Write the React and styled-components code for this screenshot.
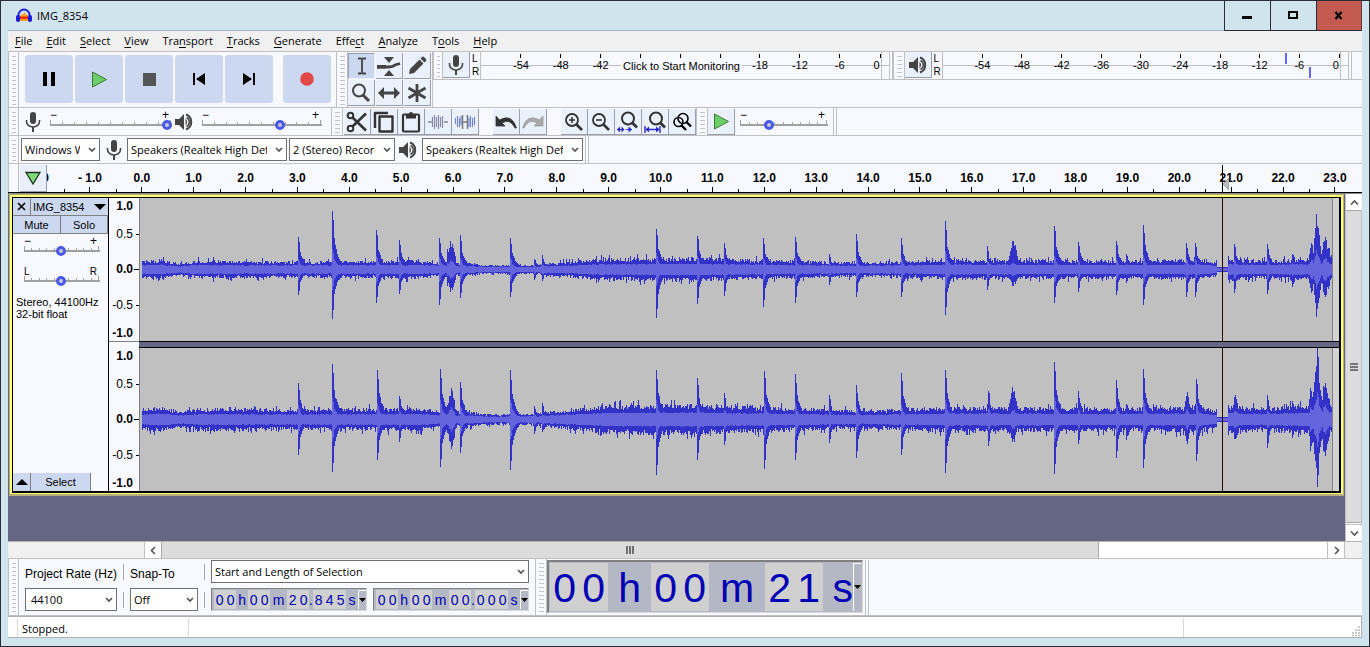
import React from "react";
import styled, { createGlobalStyle, css } from "styled-components";

const UI = `"Open Sans", "Noto Sans", sans-serif`;
const ARIAL = `"Liberation Sans", Arial, sans-serif`;
const LINE = "#c0c0c0";
const PALE = "#f8f9fe";
const BLUE = "#ccd8f0";
const SLATE = "#646684";

const Global = createGlobalStyle`
  *, *::before, *::after { box-sizing: border-box; }
  body { margin: 0; background: #d0e4ee; font-family: ${UI}; font-size: 11px; color: #000; }
  button, select, input { font: inherit; color: inherit; margin: 0; padding: 0; }
  button { border: 0; background: none; display: flex; align-items: center; justify-content: center; }
  svg { display: block; flex: none; }
`;

/* ---------- window frame ---------- */
const Window = styled.div`
  min-height: 100vh;
  display: flex;
  flex-direction: column;
  background: #d0e4ee;
  border: 1px solid #2b2d36;
  padding: 0 7px 8px;
`;
const TitleBar = styled.header`
  display: flex;
  height: 30px;
  align-items: center;
  border-bottom: 1px solid #a0b6cc;
  padding-left: 8px;
  gap: 5px;
  flex: none;
`;
const Title = styled.h1`
  flex: 1;
  margin: 0;
  font-size: 11px;
  font-weight: 400;
  line-height: 16px;
`;
const WinButtons = styled.div`
  display: flex;
  align-self: stretch;
`;
const WinButton = styled.button`
  width: 46px;
  height: 30px;
  border-left: 1px solid #2b2d36;
  border-bottom: 1px solid #2b2d36;
  background: ${(p) => (p.$close ? "#c25a50" : "transparent")};
  ${(p) => p.$close && css`border-right: 1px solid #6b3a3a;`}
`;
const MenuBar = styled.nav`
  display: flex;
  height: 20px;
  align-items: center;
  background: #f0f0f0;
  padding-left: 7px;
  gap: 14px;
  flex: none;
`;
const MenuItem = styled.button`
  line-height: 16px;
  display: block;
  u { text-underline-offset: 2px; }
`;
const Client = styled.main`
  flex: 1;
  display: flex;
  flex-direction: column;
  background: ${PALE};
`;

/* ---------- toolbars ---------- */
const DockRow = styled.div`
  display: flex;
  height: ${(p) => p.$h || 28}px;
  border-top: 1px solid ${LINE};
  flex: none;
`;
const DockColumn = styled.div`
  flex: 1;
  min-width: 0;
`;
const MeterRow = styled.div`
  display: flex;
  height: 28px;
  border-bottom: 1px solid ${LINE};
`;
const Grabber = styled.div`
  width: ${(p) => p.$w || 11}px;
  flex: none;
  align-self: stretch;
  border-left: 1px solid ${LINE};
  border-right: 1px solid ${LINE};
  padding: 4px 2px 2px 3px;
  &::before {
    content: "";
    display: block;
    height: 100%;
    background: ${(p) => (p.$plain ? "none" : "repeating-linear-gradient(#c4c4c4 0 1px, transparent 1px 4px)")};
  }
`;
const ToolBar = styled.div`
  display: flex;
  align-items: ${(p) => p.$align || "center"};
  gap: ${(p) => p.$gap || 0}px;
  padding: ${(p) => p.$pad || "0"};
  width: ${(p) => (p.$w ? p.$w + "px" : "auto")};
  flex: ${(p) => p.$flex || "none"};
  min-width: 0;
`;
const BarEnd = styled.div`
  width: 4px;
  align-self: stretch;
  flex: none;
  border-left: 1px solid ${LINE};
  border-right: 1px solid ${LINE};
`;
const TransportButton = styled.button`
  width: 48px;
  height: 48px;
  border-radius: 3px;
  background: ${BLUE};
  ${(p) => p.$apart && css`margin-left: 8px;`}
`;
const ToolGrid = styled.div`
  display: grid;
  grid-template-columns: repeat(3, 28px);
  grid-auto-rows: 27px;
  padding-top: 1px;
  border-right: 1px solid ${LINE};
`;
const ToolButton = styled.button`
  width: 27px;
  height: 26px;
  flex: none;
  background: ${(p) => (p.$down ? BLUE : "#eaf1fd")};
  border-right: 1px solid ${(p) => (p.$down ? "#eaf1fd" : "#989eb0")};
  border-bottom: 1px solid ${(p) => (p.$down ? "#eaf1fd" : "#989eb0")};
  ${(p) => p.$down && css`border-left: 1px solid #989eb0; border-top: 1px solid #989eb0;`}
`;
const Gap = styled.div`
  width: ${(p) => p.$w || 14}px;
  flex: none;
`;

/* ---------- slider ---------- */
const SliderBox = styled.div`
  position: relative;
  width: ${(p) => p.$w}px;
  height: 22px;
  flex: none;
  font-family: ${ARIAL};
`;
const SliderEnds = styled.div`
  display: flex;
  justify-content: space-between;
  height: 9px;
  line-height: 9px;
  font-size: ${(p) => (p.$letters ? 10 : 12)}px;
  padding-right: 3px;
`;
const SliderTicks = styled.div`
  display: flex;
  justify-content: space-between;
  align-items: flex-end;
  height: 6px;
  border-bottom: 2px solid #a0a0a0;
  padding-right: 1px;
  i { width: 1px; height: 2px; background: #a0a0a0; }
  i:first-child, i:last-child { height: 4px; }
`;
const Range = styled.input`
  appearance: none;
  position: absolute;
  left: 0;
  top: 8px;
  width: 100%;
  height: 12px;
  background: transparent;
  &::-webkit-slider-thumb {
    appearance: none;
    width: 10px;
    height: 10px;
    border-radius: 50%;
    border: 3px solid #4a58e8;
    background: #c8c8d8;
  }
`;
function Slider({ w, value, label, ends = ["−", "+"] }) {
  return (
    <SliderBox $w={w}>
      <SliderEnds $letters={ends[0] === "L"}><span>{ends[0]}</span><span>{ends[1]}</span></SliderEnds>
      <SliderTicks>{Array.from({ length: 11 }, (_, i) => <i key={i} />)}</SliderTicks>
      <Range type="range" min="0" max="100" defaultValue={value} aria-label={label} />
    </SliderBox>
  );
}

/* ---------- select ---------- */
const SelectBox = styled.div`
  position: relative;
  width: ${(p) => p.$w}px;
  height: 23px;
  flex: none;
  svg { position: absolute; right: 4px; top: 9px; pointer-events: none; }
`;
const NativeSelect = styled.select`
  appearance: none;
  width: 100%;
  height: 100%;
  background: #fff;
  border: 1px solid #707070;
  border-radius: 0;
  line-height: 16px;
  padding: 0 19px 0 ${(p) => p.$pad || 3}px;
`;
function Select({ w, label, value, pad, id }) {
  return (
    <SelectBox $w={w}>
      <NativeSelect id={id} aria-label={label} $pad={pad}><option>{value}</option></NativeSelect>
      <svg width="8" height="6" viewBox="0 0 8 6"><path d="M1 1l3 3 3-3" fill="none" stroke="#555" strokeWidth="1.7" /></svg>
    </SelectBox>
  );
}

/* ---------- meters ---------- */
const LR = styled.div`
  width: 10px;
  flex: none;
  display: flex;
  flex-direction: column;
  font: 10px/13px ${ARIAL};
  padding-left: 2px;
`;
const MeterFace = styled.button`
  position: relative;
  flex: 1;
  display: flex;
  align-items: stretch;
  align-self: stretch;
  min-width: 0;
  padding: 0 7px 0 20px;
  border-left: 1px solid ${LINE};
  font: 11px/12px ${ARIAL};
  background: linear-gradient(${LINE}, ${LINE}) 0 13px / 100% 1px no-repeat;
`;
const MeterMark = styled.span`
  flex: ${(p) => (p.$last ? "1 0 0" : "2 0 0")};
  min-width: 0;
  padding-top: 7px;
  padding-right: ${(p) => (p.$last ? 1 : 0)}px;
  text-align: ${(p) => (p.$last ? "right" : "center")};
  background: linear-gradient(#000, #000) ${(p) => (p.$last ? "100%" : "50%")} 2px / 1px 4px no-repeat;
  border-right: ${(p) => (p.$last ? `1px solid ${LINE}` : "0")};
`;
const MeterHint = styled.span`
  position: absolute;
  left: 140px;
  top: 6px;
  width: 121px;
  padding: 2px 0;
  background: ${PALE};
  text-align: center;
  white-space: nowrap;
`;
const PeakMark = styled.span`
  position: absolute;
  right: ${(p) => p.$right}px;
  top: ${(p) => p.$top}px;
  width: 2px;
  height: 11px;
  background: #6464ff;
`;
function Meter({ children, label, covered = [] }) {
  return (
    <MeterFace aria-label={label}>
      {[-54, -48, -42, -36, -30, -24, -18, -12, -6].map((n) => <MeterMark key={n}>{covered.includes(n) ? null : n}</MeterMark>)}
      <MeterMark $last>0</MeterMark>
      {children}
    </MeterFace>
  );
}

/* ---------- icons ---------- */
const DARK = "#444";
const Svg = ({ w = 22, h = w, vb, children }) => (
  <svg width={w} height={h} viewBox={vb || `0 0 ${w} ${h}`} fill="none">{children}</svg>
);
const MicIcon = () => (
  <Svg w={16} h={20}>
    <rect x="5" y="0" width="6" height="12" rx="3" fill={DARK} />
    <path d="M1.500 8v1.500a6.500 5.500 0 0 0 13 0V8" stroke={DARK} strokeWidth="1.600" />
    <path d="M7 15h2v5H7z" fill={DARK} />
  </Svg>
);
const SpeakerIcon = () => (
  <Svg w={20} h={18}>
    <path d="M1 6h4l5-5v16l-5-5H1z" fill={DARK} />
    <path d="M11.500 5.500q3 3.500 0 7z" fill={DARK} />
    <path d="M12 1.500a8 8 0 0 1 0 15" stroke={DARK} strokeWidth="2" />
    <path d="M12.500 4.500a5 5 0 0 1 0 9" stroke={DARK} strokeWidth="1.400" />
  </Svg>
);
const PlayIcon = ({ s = 17 }) => (
  <Svg w={s} vb="0 0 17 17"><path d="M1.500 1L15.500 8.500 1.500 16z" fill="#6ccc66" stroke="#3a7a38" strokeWidth="1" /></Svg>
);
const ICONS = {
  pause: <Svg w={16}><path d="M2 1h4v14H2zM10 1h4v14h-4z" fill="#000" /></Svg>,
  play: <PlayIcon />,
  stop: <Svg w={13}><path d="M0 0h13v13H0z" fill="#555" /></Svg>,
  start: <Svg w={14}><path d="M1 1h2v12H1zM13 1v12L4 7z" fill="#000" /></Svg>,
  end: <Svg w={14}><path d="M11 1h2v12h-2zM1 1v12l9-6z" fill="#000" /></Svg>,
  record: <Svg w={14}><circle cx="7" cy="7" r="6.800" fill="#e34848" /></Svg>,
  beam: <Svg w={20}><path d="M6 2.500h3l1 .7 1-.7h3M6 17.500h3l1-.7 1 .7h3M10 3v14" stroke={DARK} strokeWidth="1.800" /></Svg>,
  envelope: (
    <Svg w={26} h={22}>
      <path d="M8 2h10l-5 6zM8 21h10l-5-6z" fill={DARK} />
      <path d="M1 12h11q5 0 7-2l5-1.500" stroke={DARK} strokeWidth="2.800" />
      <path d="M1 10h9v3.500H1z" fill={DARK} />
    </Svg>
  ),
  draw: <Svg w={20}><path d="M2 18l1-5L12.500 3.500l4 4L7 17zM13.500 2.500L15 1q1-.8 2 0l2 2q.8 1 0 2l-1.500 1.500z" fill={DARK} /></Svg>,
  zoom: <Svg w={20}><circle cx="8" cy="7.500" r="6" stroke={DARK} strokeWidth="2" /><path d="M12 12l6 6" stroke={DARK} strokeWidth="3" /></Svg>,
  shift: <Svg w={22} h={14}><path d="M0 7l6-6v4.500h10V1l6 6-6 6V8.500H6V13z" fill={DARK} /></Svg>,
  multi: <Svg w={20}><path d="M10 1v18M1.500 5l17 10M18.500 5l-17 10" stroke={DARK} strokeWidth="2.800" /></Svg>,
  cut: (
    <Svg w={22}>
      <circle cx="4.500" cy="4.500" r="2.800" stroke="#333" strokeWidth="2" /><circle cx="4.500" cy="17.500" r="2.800" stroke="#333" strokeWidth="2" />
      <path d="M6.500 6.500L20 19.500M6.500 15.500L20 2.500" stroke="#333" strokeWidth="2.600" />
    </Svg>
  ),
  copy: <Svg w={22}><path d="M2 17V2h13M6.500 5.500h13v15h-13z" stroke="#333" strokeWidth="2.400" strokeLinejoin="round" /></Svg>,
  paste: <Svg w={20} h={22}><rect x="2" y="3.500" width="16" height="17" rx="1" stroke="#333" strokeWidth="2.200" /><path d="M5 3h3a2 2 0 0 1 4 0h3v4.500H5z" fill="#333" /></Svg>,
  trim: (
    <Svg w={22} h={16}>
      <path d="M1 8h4M17 8h4" stroke="#888" strokeWidth="1.500" />
      <path d="M5.500 3v10M7.500 1v14M9.500 3v10M11.500 1v14M13.500 3v10M15.500 2v12" stroke="#8b8ba4" strokeWidth="1.200" />
    </Svg>
  ),
  silence: (
    <Svg w={22} h={16}>
      <path d="M1.500 4v6M3.500 2v11M5.500 4v9M7 2v9M15 4v9M16.500 2v11M18.500 4v9M20.500 3v8" stroke="#6e80dc" strokeWidth="1.100" />
      <path d="M8.500 1v14M13.500 1v14M9 8h4" stroke="#777" strokeWidth="1.500" />
    </Svg>
  ),
  undo: <Svg w={22} h={16}><path d="M1 2v10h9L7 9q8-5 13 5h1.500Q17-1 4.500 6z" fill="#333" stroke="#333" strokeWidth=".8" /></Svg>,
  redo: <Svg w={22} h={16}><path d="M21 2v10h-9l3-3Q7 4 2 14H.5Q5-1 17.500 6z" fill="#aaa" stroke="#999" strokeWidth=".8" /></Svg>,
  zoomIn: <Svg w={20}><circle cx="8" cy="8" r="6" stroke="#333" strokeWidth="1.800" /><path d="M12.500 12.500l5.500 5.500" stroke="#333" strokeWidth="2.600" /><path d="M5 8h6M8 5v6" stroke="#333" strokeWidth="1.600" /></Svg>,
  zoomOut: <Svg w={20}><circle cx="8" cy="8" r="6" stroke="#333" strokeWidth="1.800" /><path d="M12.500 12.500l5.500 5.500" stroke="#333" strokeWidth="2.600" /><path d="M5 8h6" stroke="#333" strokeWidth="1.600" /></Svg>,
  fitSel: (
    <Svg w={22}>
      <circle cx="11" cy="7.500" r="6" stroke="#333" strokeWidth="2" /><path d="M15.500 12l4.500 4.500" stroke="#333" strokeWidth="2.800" />
      <path d="M0 18.500h7M9 18.500h6" stroke="#2a2ac8" strokeWidth="1.200" />
      <path d="M3 15.500v6L0 18.500zM4.500 15.500v6l3-3zM11.500 15.500v6l3.500-3z" fill="#2a2ac8" />
    </Svg>
  ),
  fitProj: (
    <Svg w={22}>
      <circle cx="12" cy="7.500" r="6" stroke="#333" strokeWidth="2" /><path d="M16.500 12l4.500 4.500" stroke="#333" strokeWidth="2.800" />
      <path d="M1 15v7M16 15v7M2 18.500h13" stroke="#2a2ac8" strokeWidth="1.400" />
      <path d="M5 15.500v6l-3.500-3zM12 15.500v6l3.500-3z" fill="#2a2ac8" />
    </Svg>
  ),
  zoomToggle: (
    <Svg w={20}>
      <circle cx="6.500" cy="10" r="4.500" stroke="#000" strokeWidth="1.600" /><circle cx="11" cy="6.500" r="5" stroke="#000" strokeWidth="1.600" />
      <path d="M9 13l5 5M14.500 10l4.500 4.500" stroke="#000" strokeWidth="2.400" />
    </Svg>
  ),
};
const tool = (name, label, down) => <ToolButton key={name} aria-label={label} $down={down}>{ICONS[name]}</ToolButton>;

/* ---------- time ruler ---------- */
const RulerRow = styled.div`
  display: flex;
  height: 30px;
  flex: none;
  border-top: 1px solid ${LINE};
  border-bottom: 1px solid #000;
`;
const PinButton = styled(ToolButton)`
  width: 27px;
  height: 27px;
  margin: 1px 0 0 1px;
  background: #e8effa;
`;
const RulerScale = styled.div`
  position: relative;
  flex: 1;
  display: flex;
  padding-right: 1px;
  font: bold 12px/14px ${ARIAL};
`;
const Second = styled.span`
  flex: 1;
  min-width: 0;
  text-align: center;
  padding-top: 7px;
  background:
    linear-gradient(#000, #000) 50% 100% / 1px 5px no-repeat,
    linear-gradient(#000, #000) 0 100% / 1px 3px no-repeat;
`;
const ClippedSecond = styled.span`
  display: flex;
  justify-content: flex-end;
  width: 2px;
  margin-right: 15px;
  padding-top: 7px;
  overflow: hidden;
  white-space: nowrap;
`;
const RulerCursor = styled.div`
  position: absolute;
  right: 133px;
  top: 1px;
  bottom: 0;
  width: 7px;
  border-left: 1px solid #000;
  svg { position: absolute; left: 0; top: 13px; }
`;

/* ---------- track area ---------- */
const Workspace = styled.div`
  flex: 1;
  display: flex;
  background: ${SLATE};
  border-top: 1px solid #888;
`;
const TrackList = styled.div`
  flex: 1;
  min-width: 0;
  padding: 0 1px;
`;
const TrackFrame = styled.section`
  border: 1px solid #b4b078;
  border-width: 1px 1px 2px 1px;
  background: #ffff78;
  padding: 2px 2px 1px 2px;
`;
const TrackInner = styled.div`
  border: 1px solid #000;
  border-width: 1px 2px 2px 1px;
  display: flex;
`;
const Panel = styled.div`
  width: 96px;
  flex: none;
  display: flex;
  flex-direction: column;
  background: ${PALE};
  border-right: 1px solid #000;
  font: 12px/14px ${ARIAL};
`;
const PanelRow = styled.div`
  display: flex;
  width: ${(p) => (p.$last ? "78px" : "auto")};
  height: 18px;
  flex: none;
  border-bottom: ${(p) => (p.$last ? "0" : "1px solid #808080")};
`;
const PanelButton = styled.button`
  width: ${(p) => (p.$w ? p.$w + "px" : "auto")};
  flex: ${(p) => (p.$w ? "none" : "1 1 0")};
  font-size: 11px;
  background: ${BLUE};
  border-right: 1px solid #808080;
  ${(p) => p.$spread && css`justify-content: space-between; padding: 0 2px 0 2px; border-right: 0;`}
`;
const PanelSliders = styled.div`
  display: flex;
  flex-direction: column;
  gap: 8px;
  padding: 3px 0 0 11px;
`;
const TrackInfo = styled.p`
  margin: 0;
  padding: 7px 3px 0;
  font-size: 11px;
  line-height: 12px;
  flex: 1;
  white-space: nowrap;
`;
const Channels = styled.div`
  flex: 1;
  min-width: 0;
  display: flex;
  flex-direction: column;
`;
const Channel = styled.div`
  display: flex;
  height: 143px;
`;
const Divider = styled.div`
  display: flex;
  height: 7px;
  &::before { content: ""; width: 30px; background: ${PALE}; border-top: 1px solid #808080; }
  &::after { content: ""; flex: 1; background: ${SLATE}; border: 1px solid #000; border-width: 1px 0; }
`;
const LevelScale = styled.div`
  width: 31px;
  flex: none;
  display: grid;
  grid-template-rows: 17px 1fr 1fr 1fr 17px;
  align-items: center;
  background: ${PALE};
  border-right: 1px solid #808080;
  padding: 1px 0;
  font: 12px/14px ${ARIAL};
`;
const Level = styled.span`
  padding-right: 6px;
  text-align: right;
  font-weight: ${(p) => (p.$bold ? 700 : 400)};
  background: linear-gradient(#000, #000) 100% 7px / ${(p) => p.$tick || 0}px 1px no-repeat;
  &:first-child { align-self: start; }
  &:last-child { align-self: end; }
`;
const WaveArea = styled.div`
  flex: 1;
  min-width: 0;
  background: #c0c0c0;
  svg { width: 100%; height: 100%; }
`;

/* transients: [x, rise, fall, half width for swells] */
const LEFT = [
  [298, 31, 25], [332, 57, 49], [376, 38, 33], [399, 29, 24], [439, 30, 35], [447, 19, 16], [451, 26, 22, 3], [460, 32, 28], [510, 30, 27],
  [534, 10, 10], [542, 12, 11], [656, 39, 48], [697, 33, 34], [724, 24, 26], [763, 28, 37], [795, 30, 33], [829, 14, 15],
  [856, 33, 27], [901, 29, 27], [945, 45, 45], [987, 20, 20], [1013, 27, 16, 3], [1054, 43, 33], [1078, 27, 22], [1116, 26, 25],
  [1126, 15, 13], [1143, 43, 35], [1186, 25, 27], [1195, 24, 27], [1234, 24, 23], [1267, 24, 24], [1292, 14, 17],
  [1311, 24, 24, 2], [1317, 44, 38, 3], [1316, 52, 47], [1325, 28, 25, 4],
];
const RIGHT = [
  [298, 34, 35], [332, 53, 52], [377, 48, 40], [399, 21, 22], [440, 48, 47], [451, 30, 29, 3], [460, 36, 33], [510, 48, 50],
  [534, 12, 14], [542, 15, 12], [656, 47, 55], [697, 38, 40], [724, 23, 25], [764, 46, 49], [795, 43, 40], [829, 21, 23],
  [856, 31, 38], [901, 45, 35], [945, 47, 53], [988, 28, 26], [1013, 28, 22, 3], [1054, 56, 54], [1078, 25, 24], [1116, 38, 38],
  [1126, 14, 20], [1143, 49, 48], [1187, 24, 24, 2], [1196, 40, 41], [1235, 24, 23, 2], [1267, 21, 28], [1292, 14, 18],
  [1311, 33, 34, 2], [1316, 50, 48, 3], [1317, 71, 67], [1325, 36, 38, 3],
];
const FLOOR = [[140, 8], [160, 10], [178, 6], [200, 9], [290, 8], [420, 9], [436, 7], [470, 6], [485, 4], [530, 4], [570, 8], [605, 11], [690, 12], [760, 10], [860, 7], [960, 10], [1110, 9], [1200, 10], [1216, 7], [1228, 11], [1260, 9], [1332, 12]];
function floorAt(x) {
  let i = 1;
  while (i < FLOOR.length - 1 && FLOOR[i][0] < x) i += 1;
  const [x0, a] = FLOOR[i - 1];
  const [x1, b] = FLOOR[i];
  return a + ((b - a) * (x - x0)) / (x1 - x0);
}
function wavePaths(peaks, gain, seed) {
  let s = seed;
  const rnd = () => { s = (s * 1664525 + 1013904223) % 4294967296; return s / 4294967296; };
  let outer = "";
  let inner = "";
  for (let x = 142; x < 1332; x += 1) {
    const quiet = x > 1216 && x < 1228;
    const base = quiet ? 2 : floorAt(x) * gain;
    let eu = 0;
    let ed = 0;
    peaks.forEach(([px, u, d, w]) => {
      const dx = x - px;
      let k = 0;
      if (w) k = Math.exp(-(dx * dx) / (2 * w * w)) * (0.75 + rnd() * 0.35);
      else if (dx === 0) k = 1;
      else if (dx === 1) k = 0.82;
      else if (dx > 1) k = 0.62 * Math.exp(-(dx - 1) / 4.5);
      eu = Math.max(eu, u * k);
      ed = Math.max(ed, d * k);
    });
    const noise = () => (quiet ? base : base * (0.62 + rnd() * 0.38 + (rnd() > 0.9 ? 0.35 : 0)));
    const up = Math.min(71, Math.round(Math.max(noise(), eu + (quiet ? 0 : base * 0.3 * rnd()))));
    const down = Math.min(71, Math.round(Math.max(noise(), ed)));
    const core = Math.round(quiet ? 1 : Math.max(base * 0.38 + rnd(), Math.min(eu, ed) * 0.4));
    outer += `M${x - 140} ${71 - up}h1V${72 + down}h-1z`;
    inner += `M${x - 140} ${71 - core}h1V${72 + core}h-1z`;
  }
  return [outer, inner];
}
const WAVES = [wavePaths(LEFT, 1, 7), wavePaths(RIGHT, 1.3, 99)];
function ChannelView({ wave }) {
  return (
    <Channel>
      <LevelScale>
        <Level $bold>1.0</Level>
        <Level $tick={3}>0.5</Level>
        <Level $bold $tick={5}>0.0</Level>
        <Level $tick={3}>-0.5</Level>
        <Level $bold>-1.0</Level>
      </LevelScale>
      <WaveArea>
        <svg viewBox="0 0 1199 143" preserveAspectRatio="none" shapeRendering="crispEdges">
          <path d="M1193 0h6v143h-6z" fill="#d0d2d4" />
          <path d="M1192 0h1v143h-1z" fill="#808080" />
          <path d={WAVES[wave][0]} fill="#3232c8" />
          <path d={WAVES[wave][1]} fill="#6464dc" />
          <path d="M1082 0h1v143h-1z" fill="#2a0000" />
        </svg>
      </WaveArea>
    </Channel>
  );
}

/* ---------- scroll bars ---------- */
const VScroll = styled.div`
  width: 17px;
  flex: none;
  display: flex;
  flex-direction: column;
  background: #fff;
  border-left: 1px solid #c0c0c0;
  border-right: 1px solid #c0c0c0;
`;
const HScrollRow = styled.div`
  display: flex;
  height: 18px;
  flex: none;
  border-top: 1px solid #b4b4b4;
  border-bottom: 1px solid #c0c0c0;
  background: #f0f0f0;
`;
const HScroll = styled.div`
  flex: 1;
  display: flex;
  background: #fff;
  margin: 0 17px 0 136px;
  border-left: 1px solid #c0c0c0;
  border-right: 1px solid #c0c0c0;
`;
const ArrowButton = styled.button`
  width: 16px;
  height: 16px;
  flex: none;
  background: #fff;
`;
const Thumb = styled.div`
  flex: ${(p) => p.$grow} 1 0;
  display: flex;
  align-items: center;
  justify-content: center;
  background: #dcdcdc;
  border: 1px solid #a8a8a8;
  border-width: ${(p) => (p.$vertical ? "1px 0" : "0 1px")};
`;
const Rest = styled.div`
  flex: ${(p) => (p.$grow ? `${p.$grow} 1 0` : "0 0 2px")};
  border-right: ${(p) => (p.$grow ? "1px solid #c0c0c0" : "0")};
  border-bottom: ${(p) => (p.$grow ? "0" : "1px solid #c0c0c0")};
`;
const Arrow = ({ d }) => <Svg w={9}><path d={d} stroke="#555" strokeWidth="1.600" /></Svg>;

/* ---------- selection bar ---------- */
const SelectionBar = styled.div`
  display: flex;
  height: 57px;
  flex: none;
  border-bottom: 1px solid ${LINE};
`;
const Stack = styled.div`
  display: flex;
  flex-direction: column;
  justify-content: space-between;
  padding: 1px 0 4px;
`;
const FieldLabel = styled.label`
  font: 12px/14px ${ARIAL};
  padding-top: 7px;
  white-space: nowrap;
`;
const Rules = styled.div`
  width: 1px;
  margin: 5px 6px 7px;
  background: linear-gradient(#a8a8a8 0 16px, transparent 16px 28px, #a8a8a8 28px);
`;
const Times = styled.div`
  display: flex;
  gap: 6px;
`;
const TimeBox = styled.div`
  display: flex;
  width: ${(p) => (p.$big ? 316 : 156)}px;
  height: ${(p) => (p.$big ? 53 : 23)}px;
  padding: ${(p) => (p.$big ? "1px" : "1px 1px 1px 2px")};
  background: #b4b8c4;
  border: 1px solid #808080;
  border-width: ${(p) => (p.$big ? "2px 1px 1px 2px" : "1px")};
  border-right-color: #d8d8d8;
  border-bottom-color: #d8d8d8;
  font: ${(p) => (p.$big ? "41px/50px" : "14px/21px")} ${ARIAL};
  color: #0000b4;
`;
const Digit = styled.span`
  flex: none;
  width: ${(p) => (p.$big ? 29 : 11)}px;
  text-align: center;
  background: #d0d0d0;
`;
const Unit = styled.span`
  flex: none;
  width: ${(p) => p.$w}px;
  display: flex;
  justify-content: ${(p) => (p.$end ? "flex-end" : "center")};
`;
const TimeMenu = styled.button`
  flex: 1;
  border-left: 1px solid #fff;
  border-top: 1px solid #fff;
`;
function TimeField({ parts, big, label }) {
  return (
    <TimeBox $big={big} role="group" aria-label={label}>
      {parts.map(([t, w], i) => (w
        ? <Unit key={i} $w={w} $end={big && i === parts.length - 1}>{t}</Unit>
        : t.split("").map((c, j) => <Digit key={i + "-" + j} $big={big}>{c}</Digit>)))}
      <TimeMenu aria-label={label + " format"}><svg width="7" height="5" viewBox="0 0 7 5"><path d="M0 0h7L3.500 4z" fill="#000" /></svg></TimeMenu>
    </TimeBox>
  );
}
const StatusBar = styled.footer`
  display: flex;
  height: 22px;
  flex: none;
  background: #fff;
  border: 1px solid #b0b0b0;
  border-left: 0;
  line-height: 22px;
  svg { align-self: flex-end; }
`;
const StatusCell = styled.div`
  width: ${(p) => (p.$w ? p.$w + "px" : "auto")};
  flex: ${(p) => (p.$w ? "none" : "1")};
  padding-left: 4px;
  margin-top: 1px;
  border-right: 1px solid #d8d8d8;
`;

const MENUS = [["", "F", "ile"], ["", "E", "dit"], ["", "S", "elect"], ["", "V", "iew"], ["Tra", "n", "sport"], ["", "T", "racks"], ["", "G", "enerate"], ["Effe", "c", "t"], ["", "A", "nalyze"], ["T", "o", "ols"], ["", "H", "elp"]];
const SECONDS = ["- 1.0", ...Array.from({ length: 24 }, (_, i) => i + ".0")];

export default function App() {
  return (
    <>
      <Global />
      <Window>
        <TitleBar>
          <Svg w={16} h={15}>
            <path d="M2.500 9V7a5.500 5.500 0 0 1 11 0v2" stroke="#1a1ad8" strokeWidth="1.800" />
            <path d="M3 9l2-2 1-2 1 2 1.500-3L10 7l1-1 2 3v4H3z" fill="#f8a020" />
            <path d="M3 8.500h10V11H3z" fill="#e83010" />
            <rect x="0" y="7" width="4" height="7" rx="2" fill="#1a1ad8" /><rect x="12" y="7" width="4" height="7" rx="2" fill="#1a1ad8" />
          </Svg>
          <Title>IMG_8354</Title>
          <WinButtons>
            <WinButton aria-label="Minimize"><Svg w={11} h={11}><path d="M0 6h10v3H0z" fill="#000" /></Svg></WinButton>
            <WinButton aria-label="Maximize"><Svg w={11} h={9}><path d="M1 1h8v6H1z" stroke="#000" strokeWidth="2" /></Svg></WinButton>
            <WinButton aria-label="Close" $close><Svg w={10} h={9}><path d="M1.500 1l6 7M7.500 1l-6 7" stroke="#000" strokeWidth="2.200" /></Svg></WinButton>
          </WinButtons>
        </TitleBar>
        <MenuBar>
          {MENUS.map(([a, u, b]) => <MenuItem key={a + u + b}>{a}<u>{u}</u>{b}</MenuItem>)}
        </MenuBar>
        <Client>
          <DockRow $h={56}>
            <Grabber />
            <ToolBar $gap={2} $pad="0 0 1px 6px" $w={317}>
              {[["pause", "Pause"], ["play", "Play"], ["stop", "Stop"], ["start", "Skip to Start"], ["end", "Skip to End"], ["record", "Record"]].map(([n, l]) => (
                <TransportButton key={n} aria-label={l} $apart={n === "record"}>{ICONS[n]}</TransportButton>
              ))}
            </ToolBar>
            <Grabber $w={12} />
            <ToolGrid>
              {tool("beam", "Selection Tool", true)}
              {tool("envelope", "Envelope Tool")}
              {tool("draw", "Draw Tool")}
              {tool("zoom", "Zoom Tool")}
              {tool("shift", "Time Shift Tool")}
              {tool("multi", "Multi-Tool")}
            </ToolGrid>
            <DockColumn>
              <MeterRow>
                <ToolBar $flex="1 1 0" $align="flex-start">
                  <Grabber $w={10} />
                  <ToolButton aria-label="Recording Meter"><MicIcon /></ToolButton>
                  <LR><span>L</span><span>R</span></LR>
                  <Meter label="Recording level" covered={[-36, -30, -24]}><MeterHint>Click to Start Monitoring</MeterHint></Meter>
                  <BarEnd />
                </ToolBar>
                <ToolBar $flex="1 1 0" $align="flex-start">
                  <Grabber $w={12} />
                  <ToolButton aria-label="Playback Meter"><SpeakerIcon /></ToolButton>
                  <LR><span>L</span><span>R</span></LR>
                  <Meter label="Playback level"><PeakMark $right={61} $top={1} /><PeakMark $right={37} $top={15} /></Meter>
                  <BarEnd />
                </ToolBar>
                <Gap $w={10} />
              </MeterRow>
            </DockColumn>
          </DockRow>

          <DockRow>
            <Grabber />
            <ToolBar $pad="0 0 0 6px" $w={312}>
              <MicIcon />
              <Gap $w={9} />
              <Slider w={122} value={100} label="Recording volume" />
              <Gap $w={2} />
              <SpeakerIcon />
              <Gap $w={8} />
              <Slider w={120} value={66} label="Playback volume" />
            </ToolBar>
            <Grabber $w={12} />
            <ToolBar $align="flex-end" $pad="0 0 0 1px">
              {tool("cut", "Cut")}
              {tool("copy", "Copy")}
              {tool("paste", "Paste")}
              {tool("trim", "Trim")}
              {tool("silence", "Silence")}
              <Gap />
              {tool("undo", "Undo")}
              {tool("redo", "Redo")}
              <Gap />
              {tool("zoomIn", "Zoom In")}
              {tool("zoomOut", "Zoom Out")}
              {tool("fitSel", "Fit Selection")}
              {tool("fitProj", "Fit Project")}
              {tool("zoomToggle", "Zoom Toggle")}
            </ToolBar>
            <Grabber $w={12} />
            <ToolBar>
              <ToolButton aria-label="Play at speed"><PlayIcon /></ToolButton>
              <Gap $w={5} />
              <Slider w={88} value={31} label="Playback speed" />
              <Gap $w={5} />
              <BarEnd />
            </ToolBar>
          </DockRow>

          <DockRow>
            <Grabber />
            <ToolBar $pad="0 0 0 2px">
              <Select w={79} label="Audio host" value="Windows WASAPI" />
              <Gap $w={6} />
              <MicIcon />
              <Gap $w={5} />
              <Select w={160} label="Recording device" value="Speakers (Realtek High Definition Audio)" />
              <Gap $w={2} />
              <Select w={106} label="Recording channels" value="2 (Stereo) Recording Channels" />
              <Gap $w={3} />
              <SpeakerIcon />
              <Gap $w={4} />
              <Select w={161} label="Playback device" value="Speakers (Realtek High Definition Audio)" />
              <Gap $w={2} />
              <BarEnd />
            </ToolBar>
          </DockRow>

          <RulerRow>
            <Grabber $plain />
            <PinButton aria-label="Pinned play head">
              <Svg w={16} h={15}><path d="M1 1.500h14L8 13z" fill="#7cdc78" stroke="#1c301c" strokeWidth="1.300" /></Svg>
            </PinButton>
            <RulerScale>
              <ClippedSecond>0</ClippedSecond>
              {SECONDS.map((t) => <Second key={t}>{t}</Second>)}
              <RulerCursor><Svg w={6} h={12}><path d="M6 0v12L0 6z" fill="#bbb" stroke="#888" strokeWidth=".8" /></Svg></RulerCursor>
            </RulerScale>
          </RulerRow>

          <Workspace>
            <TrackList>
              <TrackFrame>
                <TrackInner>
                  <Panel>
                    <PanelRow>
                      <PanelButton $w={18} aria-label="Close track"><Svg w={9}><path d="M1 1l7 7M8 1L1 8" stroke="#000" strokeWidth="1.600" /></Svg></PanelButton>
                      <PanelButton $spread>IMG_8354<Svg w={12} h={6}><path d="M0 0h12L6 6z" fill="#000" /></Svg></PanelButton>
                    </PanelRow>
                    <PanelRow>
                      <PanelButton $w={48}>Mute</PanelButton>
                      <PanelButton>Solo</PanelButton>
                    </PanelRow>
                    <PanelSliders>
                      <Slider w={76} value={48} label="Gain" />
                      <Slider w={76} value={48} label="Pan" ends={["L", "R"]} />
                    </PanelSliders>
                    <TrackInfo>Stereo, 44100Hz<br />32-bit float</TrackInfo>
                    <PanelRow $last>
                      <PanelButton $w={18} aria-label="Collapse"><Svg w={12} h={6}><path d="M0 6h12L6 0z" fill="#000" /></Svg></PanelButton>
                      <PanelButton>Select</PanelButton>
                    </PanelRow>
                  </Panel>
                  <Channels>
                    <ChannelView wave={0} />
                    <Divider />
                    <ChannelView wave={1} />
                  </Channels>
                </TrackInner>
              </TrackFrame>
            </TrackList>
            <VScroll>
              <ArrowButton aria-label="Scroll up"><Arrow d="M1 6.500L4.500 3 8 6.500" /></ArrowButton>
              <Thumb $grow={1} $vertical><Svg w={8} h={8}><path d="M0 1h8M0 4h8M0 7h8" stroke="#555" strokeWidth="1.600" /></Svg></Thumb>
              <Rest />
              <ArrowButton aria-label="Scroll down"><Arrow d="M1 2.500L4.500 6 8 2.500" /></ArrowButton>
            </VScroll>
          </Workspace>
          <HScrollRow>
            <HScroll>
              <ArrowButton aria-label="Scroll left"><Arrow d="M6 1L2.500 4.500 6 8" /></ArrowButton>
              <Thumb $grow={938}><Svg w={8} h={8}><path d="M1 0v8M4 0v8M7 0v8" stroke="#555" strokeWidth="1.600" /></Svg></Thumb>
              <Rest $grow={229} />
              <ArrowButton aria-label="Scroll right"><Arrow d="M3 1l3.500 3.500L3 8" /></ArrowButton>
            </HScroll>
          </HScrollRow>

          <SelectionBar>
            <Grabber />
            <Gap $w={6} />
            <Stack>
              <FieldLabel htmlFor="rate">Project Rate (Hz)</FieldLabel>
              <Select id="rate" w={92} value="44100" pad={5} />
            </Stack>
            <Rules />
            <Stack>
              <FieldLabel htmlFor="snap">Snap-To</FieldLabel>
              <Select id="snap" w={68} value="Off" />
            </Stack>
            <Rules />
            <Stack>
              <Select w={318} label="Selection mode" value="Start and Length of Selection" />
              <Times>
                <TimeField label="Selection start" parts={[["00"], ["h", 12], ["00"], ["m", 17], ["20"], [".", 4], ["845"], ["s", 12]]} />
                <TimeField label="Selection length" parts={[["00"], ["h", 12], ["00"], ["m", 17], ["00"], [".", 4], ["000"], ["s", 12]]} />
              </Times>
            </Stack>
            <Gap $w={6} />
            <Grabber $w={12} />
            <ToolBar $align="flex-start" $pad="1px 0 0 0">
              <TimeField big label="Audio position" parts={[["00"], ["h", 43], ["00"], ["m", 56], ["21"], ["s", 30]]} />
              <Gap $w={2} />
              <BarEnd />
            </ToolBar>
          </SelectionBar>
        </Client>
        <StatusBar>
          <StatusCell $w={10} />
          <StatusCell $w={171}>Stopped.</StatusCell>
          <StatusCell />
          <Gap $w={166} />
          <Svg w={11}><path d="M8 1h2M5 4h2M8 4h2M2 7h2M5 7h2M8 7h2M2 9.500h2M5 9.500h2M8 9.500h2" stroke="#bbb" strokeWidth="1.500" /></Svg>
        </StatusBar>
      </Window>
    </>
  );
}
